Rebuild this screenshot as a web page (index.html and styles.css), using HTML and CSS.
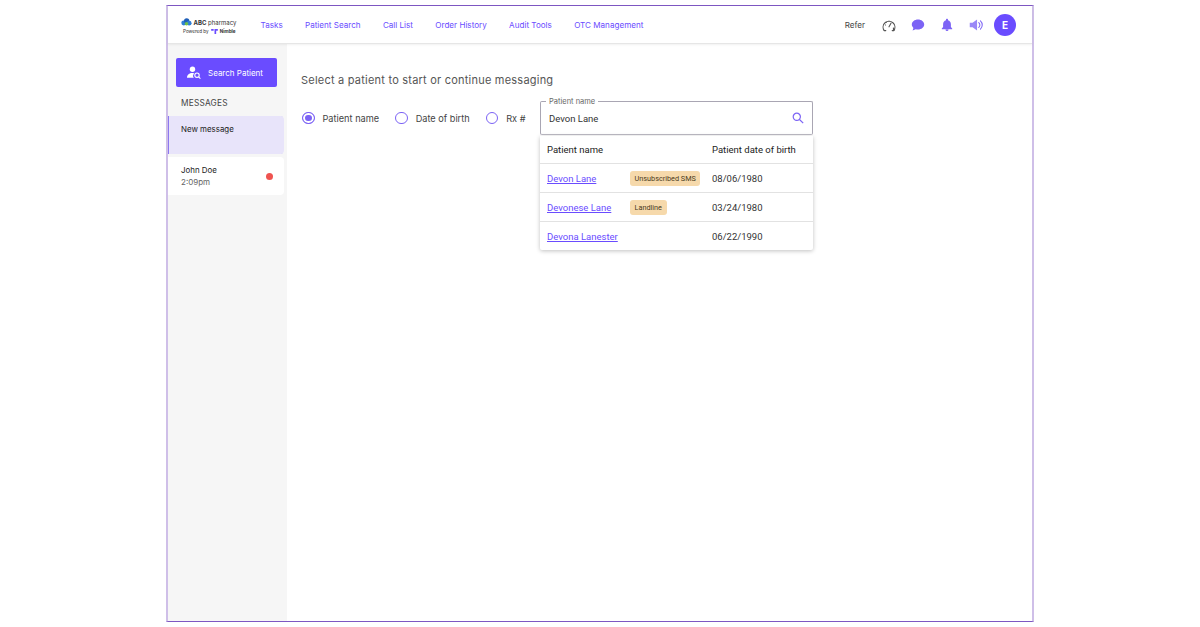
FILE: index.html
```html
<!DOCTYPE html>
<html lang="en">
<head>
  <meta charset="UTF-8" />
  <meta name="viewport" content="width=device-width, initial-scale=1.0" />
  <title>Messaging</title>
  <link rel="stylesheet" href="styles.css">
</head>
<body>

  <div class="frame">
    <header class="topbar">
      <div class="brand">
        <div class="brand-line">
          <svg class="brand-cloud" viewBox="0 0 12 9" width="11" height="8">
            <circle cx="3" cy="5.6" r="2.8" fill="#2f7fd6"/>
            <circle cx="6.2" cy="3.2" r="3" fill="#1f5fb8"/>
            <circle cx="9" cy="5.8" r="2.7" fill="#2f7fd6"/>
            <circle cx="6" cy="6.4" r="2" fill="#6fc04a"/>
          </svg>
          <span><b>ABC</b> pharmacy</span>
        </div>
        <div class="brand-sub">
          <span>Powered by</span>
          <svg viewBox="0 0 8 6" width="7" height="5"><path d="M0 0h3v2H0zM4 0h4v2H6v4H4z" fill="#6a4cff"/></svg>
          <b>Nimble</b>
        </div>
      </div>

      <nav class="nav">
        <a>Tasks</a>
        <a>Patient Search</a>
        <a>Call List</a>
        <a>Order History</a>
        <a>Audit Tools</a>
        <a>OTC Management</a>
      </nav>

      <div class="actions">
        <span class="refer">Refer</span>
        <svg class="icon" viewBox="0 0 14 14" width="14" height="14" fill="none" stroke="#555" stroke-width="1.1">
          <path d="M2.200 12.600a5.900 5.900 0 1 1 9.600 0"/>
          <path d="M2.200 12.600h1.600M10.200 12.600h1.600" stroke-linecap="round"/>
          <path d="M7 8.800l2-3.600" stroke-linecap="round"/>
          <path d="M7 2.800v1.200M4 3.800l.6 1M3 6.800l1 .4" stroke-width="0.9"/>
          <path d="M11.600 9.600v3" stroke-width="1.400"/>
        </svg>
        <svg class="icon" viewBox="0 0 14 14" width="14" height="14">
          <path d="M7 1.600c3.400 0 6.200 2.200 6.200 5s-2.800 5-6.200 5c-.8 0-1.500-.1-2.200-.3L1.600 12.600l.8-2.700C1.400 9 .8 7.900.8 6.600c0-2.800 2.800-5 6.200-5z" fill="#7c63f5"/>
        </svg>
        <svg class="icon" viewBox="0 0 14 14" width="14" height="14">
          <path d="M7 .8c.6 0 1 .4 1 1v.5c1.800.5 2.900 2 2.900 3.900v2.900l1.300 1.500v.6H1.800v-.6l1.300-1.500V6.200c0-1.900 1.100-3.400 2.900-3.900v-.5c0-.6.4-1 1-1zM5.500 11.600h3a1.500 1.500 0 0 1-3 0z" fill="#7c63f5"/>
        </svg>
        <svg class="icon" viewBox="0 0 16 14" width="15" height="14">
          <path d="M.8 4.600h3L8.600 1.200v11.600L3.800 9.400h-3z" fill="#9a88f7"/>
          <path d="M10.400 4.400a3.400 3.400 0 0 1 0 5.200M12.200 2.600a6 6 0 0 1 0 8.800" fill="none" stroke="#7c63f5" stroke-width="1.100" stroke-linecap="round"/>
        </svg>
        <div class="avatar">E</div>
      </div>
    </header>

    <div class="content">
      <aside class="sidebar">
        <button class="search-btn">
          <svg viewBox="0 0 14 13" width="14" height="13" fill="#fff">
            <circle cx="5.500" cy="3.200" r="2.700"/>
            <path d="M0 11.800c0-3 2.400-4.800 5.400-4.800.6 0 1.100.1 1.600.2a4 4 0 0 0-.2 4.600z"/>
            <circle cx="10" cy="9.200" r="2.200" fill="none" stroke="#fff" stroke-width="1.100"/>
            <path d="M11.600 10.800l1.800 1.800" stroke="#fff" stroke-width="1.100"/>
          </svg>
          <span>Search Patient</span>
        </button>
        <div class="side-title">MESSAGES</div>
        <div class="msg msg-active">
          <div class="msg-name">New message</div>
        </div>
        <div class="msg">
          <div>
            <div class="msg-name">John Doe</div>
            <div class="msg-time">2:09pm</div>
          </div>
          <span class="dot"></span>
        </div>
      </aside>

      <main class="main">
        <h1 class="heading">Select a patient to start or continue messaging</h1>
        <div class="search-row">
          <label class="radio radio-on"><span class="circle"></span>Patient name</label>
          <label class="radio"><span class="circle"></span>Date of birth</label>
          <label class="radio"><span class="circle"></span>Rx #</label>

          <div class="field-wrap">
            <div class="field">
              <span class="field-label">Patient name</span>
              <span class="field-value">Devon Lane</span>
              <svg viewBox="0 0 12 12" width="12" height="12" fill="none" stroke="#7c63f5" stroke-width="1.200">
                <circle cx="4.800" cy="4.800" r="3.600"/>
                <path d="M7.500 7.500l3.700 3.700"/>
              </svg>
            </div>

            <div class="dropdown">
              <div class="row row-head">
                <div class="col-name">Patient name</div>
                <div class="col-tag"></div>
                <div class="col-dob">Patient date of birth</div>
              </div>
              <div class="row">
                <div class="col-name"><a>Devon Lane</a></div>
                <div class="col-tag"><span class="tag">Unsubscribed SMS</span></div>
                <div class="col-dob">08/06/1980</div>
              </div>
              <div class="row">
                <div class="col-name"><a>Devonese Lane</a></div>
                <div class="col-tag"><span class="tag">Landline</span></div>
                <div class="col-dob">03/24/1980</div>
              </div>
              <div class="row">
                <div class="col-name"><a>Devona Lanester</a></div>
                <div class="col-tag"></div>
                <div class="col-dob">06/22/1990</div>
              </div>
            </div>
          </div>
        </div>
      </main>
    </div>
  </div>

</body>
</html>
```

FILE: styles.css
```css
* {
  box-sizing: border-box;
}

body {
  font-family: Inter, Arial, sans-serif;
  margin: 0;
  background: #fff;
  color: #333;
}

.frame {
  margin: 5px 0 0 166px;
  width: 868px;
  height: 617px;
  border-top: 1px solid #7e57c2;
  border-bottom: 1px solid #7e57c2;
  border-left: 2px solid #cfbfe8;
  border-right: 2px solid #cfbfe8;
  display: flex;
  flex-direction: column;
}

/* Top bar */
.topbar {
  height: 38px;
  flex-shrink: 0;
  display: flex;
  align-items: center;
  padding: 0 16px 0 13px;
  border-bottom: 1px solid #e6e6e6;
  box-shadow: 0 1px 2px rgba(0, 0, 0, 0.06);
  position: relative;
}

.brand {
  width: 80px;
  flex-shrink: 0;
  padding-top: 3px;
  color: #333;
}

.brand-line {
  display: flex;
  align-items: center;
  gap: 1.500px;
  font-size: 6px;
  white-space: nowrap;
}

.brand-sub {
  display: flex;
  align-items: center;
  gap: 2px;
  margin: 3px 0 0 2px;
  font-size: 4.600px;
  white-space: nowrap;
}

.nav {
  display: flex;
  gap: 22.300px;
  flex: 1;
  margin-left: -0.5px;
}

.nav a {
  font-size: 8.100px;
  color: #6a4cff;
  white-space: nowrap;
}

.actions {
  display: flex;
  align-items: center;
  gap: 15px;
}

.refer {
  font-size: 8.100px;
  color: #444;
  margin-right: 2px;
}

.icon {
  display: block;
}

.avatar {
  width: 22px;
  height: 22px;
  margin-left: -5px;
  border-radius: 50%;
  background: #6a4cff;
  color: #fff;
  font-size: 10px;
  font-weight: 700;
  display: flex;
  align-items: center;
  justify-content: center;
}

.content {
  flex: 1;
  display: flex;
  min-height: 0;
}

/* Sidebar */
.sidebar {
  width: 119px;
  flex-shrink: 0;
  background: #f6f6f6;
  padding-top: 14px;
}

.search-btn {
  display: flex;
  align-items: center;
  gap: 7px;
  width: 101px;
  height: 29px;
  margin-left: 8px;
  padding: 0 0 0 11px;
  background: #6a4cff;
  color: #fff;
  border: none;
  border-radius: 2px;
  font-family: inherit;
  font-size: 8px;
}

.side-title {
  margin: 11px 0 8px 13px;
  font-size: 8.300px;
  line-height: 10px;
  letter-spacing: 0.2px;
  color: #444;
}

.msg {
  width: 116px;
  height: 38px;
  margin-bottom: 3px;
  padding: 8px 13px;
  background: #fff;
  border-radius: 0 4px 4px 0;
  display: flex;
  justify-content: space-between;
  align-items: center;
}

.msg-active {
  background: #e8e4fa;
  box-shadow: inset 1px 0 0 #8d78f0;
  align-items: flex-start;
}

.msg-name {
  font-size: 7.900px;
  line-height: 11px;
  color: #222;
}

.msg-time {
  margin-top: 1px;
  font-size: 8px;
  line-height: 11px;
  color: #666;
}

.dot {
  width: 7px;
  height: 7px;
  margin-right: -2px;
  border-radius: 50%;
  background: #ef5350;
}

/* Main */
.main {
  flex: 1;
  padding: 28px 14px 0;
}

.heading {
  margin: 0;
  font-size: 11px;
  line-height: 16px;
  font-weight: 400;
  letter-spacing: 0.22px;
  color: #555;
}

.search-row {
  display: flex;
  align-items: center;
  margin: 13px 0 0 1px;
}

.radio {
  display: flex;
  align-items: center;
  gap: 8px;
  font-size: 9.200px;
  color: #444;
  margin-right: 16px;
  white-space: nowrap;
}

.radio:nth-child(3) {
  margin-right: 14.500px;
}

.circle {
  width: 12.500px;
  height: 12.500px;
  border: 1.300px solid #7c63f5;
  border-radius: 50%;
  display: block;
}

.radio-on .circle {
  background: #7c63f5;
  box-shadow: inset 0 0 0 2px #fff;
}

/* Search field and results */
.field-wrap {
  position: relative;
  width: 273px;
  flex-shrink: 0;
}

.field {
  height: 34px;
  padding: 0 8px 0 8px;
  border: 1px solid #a9a6b3;
  border-bottom-color: #bcbac4;
  border-radius: 2px;
  display: flex;
  align-items: center;
  justify-content: space-between;
  position: relative;
}

.field-label {
  position: absolute;
  top: -5px;
  left: 5px;
  padding: 0 3px;
  background: #fff;
  font-size: 7.500px;
  line-height: 9px;
  color: #666;
}

.field-value {
  font-family: Roboto, Arial, sans-serif;
  font-size: 9.500px;
  color: #333;
}

.dropdown {
  position: absolute;
  top: 35px;
  left: 0;
  right: 0;
  background: #fff;
  border-radius: 0 0 2px 2px;
  box-shadow: 0 1px 4px rgba(0, 0, 0, 0.25);
  font-family: Roboto, Arial, sans-serif;
  font-size: 9.500px;
  color: #333;
}

.row {
  height: 29px;
  display: flex;
  align-items: center;
  padding-left: 7px;
  border-top: 1px solid #e2e2e2;
}

.row-head {
  height: 27px;
  border-top: none;
  color: #222;
}

.col-name {
  width: 83px;
  white-space: nowrap;
}

.col-name a {
  color: #6a4cff;
  text-decoration: underline;
}

.col-tag {
  width: 82px;
}

.col-dob {
  white-space: nowrap;
}

.tag {
  display: inline-block;
  padding: 0 4.500px;
  height: 15px;
  line-height: 15px;
  background: #f6d9ab;
  border-radius: 3px;
  font-size: 7.300px;
  color: #4a3a20;
  white-space: nowrap;
}
```
